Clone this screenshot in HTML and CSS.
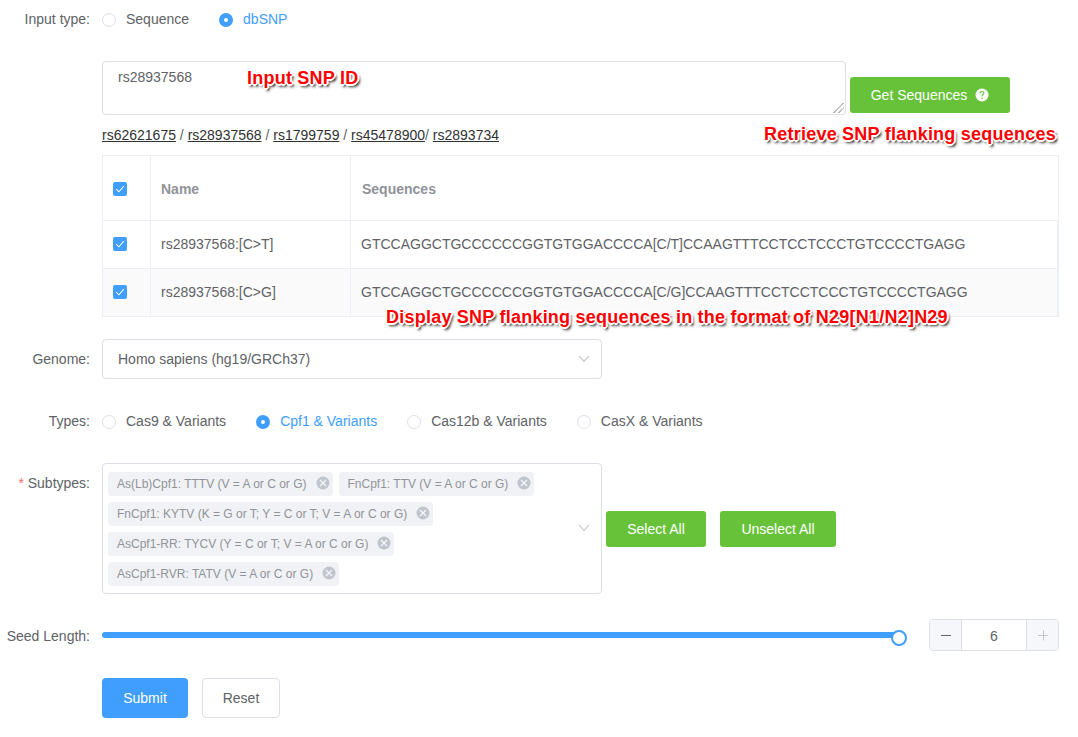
FILE: index.html
```html
<!DOCTYPE html>
<html lang="en">
<head>
<meta charset="utf-8">
<title>SNP design form</title>
<link rel="stylesheet" href="styles.css">
</head>
<body>
<svg class="defs" width="0" height="0">
  <symbol id="check" viewBox="0 0 14 14"><path d="M3.2 7.200 5.900 9.800 10.900 4" fill="none" stroke="#fff" stroke-width="1.1"/></symbol>
  <symbol id="down" viewBox="0 0 12 8"><path d="M1 1 6 6.4 11 1" fill="none" stroke="#c0c4cc" stroke-width="1.1"/></symbol>
  <symbol id="close" viewBox="0 0 14 14"><circle cx="7" cy="7" r="6.5" fill="#c0c4cc"/><path d="M4 4 10 10M10 4 4 10" stroke="#f4f5f8" stroke-width="1.4"/></symbol>
</svg>
<form class="form">
  <div class="item">
    <div class="label">Input type:</div>
    <div class="content radios">
      <label class="radio"><i class="dot"></i>Sequence</label>
      <label class="radio on"><i class="dot"></i>dbSNP</label>
    </div>
  </div>
  <div class="item">
    <div class="label"></div>
    <div class="content">
      <div class="query">
        <div class="textarea">rs28937568
          <svg class="grip" width="12" height="12"><path d="M.5 11 10.500 1M5.500 11 10.500 6" stroke="#555" stroke-width="1" stroke-dasharray="1.2 .4"/></svg>
          <span class="note note-input">Input SNP ID</span>
        </div>
        <div class="btn green fetch">Get Sequences
          <svg width="14" height="14" viewBox="0 0 14 14"><circle cx="7" cy="7" r="6.5" fill="#fff"/><path d="M5 5.6C5 4.2 5.8 3.5 7 3.5s2 .8 2 1.8C9 6.600 7 6.500 7 8.300" fill="none" stroke="#67c23a" stroke-width="1.1"/><circle cx="7" cy="10.200" r=".75" fill="#67c23a"/></svg>
        </div>
      </div>
      <div class="links"><a>rs62621675</a> / <a>rs28937568</a> / <a>rs1799759</a> / <a>rs45478900</a>/ <a>rs2893734</a><span class="note note-get">Retrieve SNP flanking sequences</span></div>
      <div class="table">
        <div class="tr head"><div class="td"><svg class="box"><use href="#check"/></svg></div><div class="td">Name</div><div class="td">Sequences</div></div>
        <div class="tr"><div class="td"><svg class="box"><use href="#check"/></svg></div><div class="td">rs28937568:[C&gt;T]</div><div class="td">GTCCAGGCTGCCCCCCGGTGTGGACCCCA[C/T]CCAAGTTTCCTCCTCCCTGTCCCCTGAGG</div></div>
        <div class="tr striped"><div class="td"><svg class="box"><use href="#check"/></svg></div><div class="td">rs28937568:[C&gt;G]</div><div class="td">GTCCAGGCTGCCCCCCGGTGTGGACCCCA[C/G]CCAAGTTTCCTCCTCCCTGTCCCCTGAGG</div></div>
        <span class="note note-format">Display SNP flanking sequences in the format of N29[N1/N2]N29</span>
      </div>
    </div>
  </div>
  <div class="item">
    <div class="label">Genome:</div>
    <div class="content"><div class="select">Homo sapiens (hg19/GRCh37)<svg class="arrow" width="12" height="8"><use href="#down"/></svg></div></div>
  </div>
  <div class="item">
    <div class="label">Types:</div>
    <div class="content radios">
      <label class="radio"><i class="dot"></i>Cas9 &amp; Variants</label>
      <label class="radio on"><i class="dot"></i>Cpf1 &amp; Variants</label>
      <label class="radio"><i class="dot"></i>Cas12b &amp; Variants</label>
      <label class="radio"><i class="dot"></i>CasX &amp; Variants</label>
    </div>
  </div>
  <div class="item">
    <div class="label"><span class="star">*</span> Subtypes:</div>
    <div class="content subtypes">
      <div class="multi">
        <div class="tags">
          <span class="tag">As(Lb)Cpf1: TTTV (V = A or C or G)<svg><use href="#close"/></svg></span>
          <span class="tag">FnCpf1: TTV (V = A or C or G)<svg><use href="#close"/></svg></span>
          <span class="tag">FnCpf1: KYTV (K = G or T; Y = C or T; V = A or C or G)<svg><use href="#close"/></svg></span>
          <span class="tag">AsCpf1-RR: TYCV (Y = C or T; V = A or C or G)<svg><use href="#close"/></svg></span>
          <span class="tag">AsCpf1-RVR: TATV (V = A or C or G)<svg><use href="#close"/></svg></span>
        </div>
        <svg class="arrow" width="12" height="8"><use href="#down"/></svg>
      </div>
      <div class="btn green all">Select All</div>
      <div class="btn green none">Unselect All</div>
    </div>
  </div>
  <div class="item">
    <div class="label">Seed Length:</div>
    <div class="content seed">
      <div class="track"><i class="knob"></i></div>
      <div class="stepper">
        <div class="step"><svg width="12" height="12"><path d="M1 5.500H11" stroke="#606266"/></svg></div>
        <div class="value">6</div>
        <div class="step"><svg width="12" height="12"><path d="M1 5.500H11M6.500 0.500V10.500" stroke="#c0c4cc"/></svg></div>
      </div>
    </div>
  </div>
  <div class="item">
    <div class="label"></div>
    <div class="content actions">
      <div class="btn blue">Submit</div>
      <div class="btn plain">Reset</div>
    </div>
  </div>
</form>
</body>
</html>
```
FILE: styles.css
```css
* { box-sizing: border-box; }
body {
  margin: 0;
  height: 737px;
  overflow: hidden;
  background: #fff;
  color: #606266;
  font: 14px/40px "Liberation Sans", Arial, sans-serif;
}
.defs { position: absolute; }
.form {
  display: flex;
  flex-direction: column;
  gap: 22px;
  width: 1059px;
  margin-top: -1px;
}
.item { display: flex; }
.label {
  width: 102px;
  flex: none;
  padding-right: 12px;
  text-align: right;
  white-space: nowrap;
}
.star { color: #f56c6c; }
.content { flex: 1; min-width: 0; }
.radios { display: flex; gap: 30px; height: 40px; }
.radio { display: flex; align-items: center; }
.dot {
  width: 14px;
  height: 14px;
  margin: 2px 10px 0 0;
  border: 1px solid #dcdfe6;
  border-radius: 50%;
}
.on { color: #409eff; }
.on .dot { border: 5px solid #409eff; }

.query { display: flex; align-items: flex-end; gap: 4px; height: 54px; }
.textarea {
  position: relative;
  width: 744px;
  height: 54px;
  padding: 5px 15px;
  border: 1px solid #dcdfe6;
  border-radius: 4px;
  line-height: 21px;
}
.grip { position: absolute; right: 0; bottom: 0; }
.btn {
  display: flex;
  align-items: center;
  justify-content: center;
  height: 36px;
  border-radius: 3px;
  line-height: 36px;
  white-space: nowrap;
}
.green { background: #67c23a; color: #fff; }
.fetch { width: 160px; gap: 8px; margin-bottom: 2px; }
.links { position: relative; height: 40px; white-space: pre; }
.links a { color: #303133; text-decoration: underline; }

.note {
  position: absolute;
  z-index: 1;
  color: #f00;
  font-size: 18px;
  font-weight: bold;
  letter-spacing: 0.23px;
  line-height: 20px;
  white-space: nowrap;
  text-shadow: 1px 0 #fff, -1px 0 #fff, 0 1px #fff, 0 -1px #fff,
    1px 1px #fff, -1px 1px #fff, 1px -1px #fff, -1px -1px #fff,
    2px 0 #fff, -2px 0 #fff, 0 2px #fff, 0 -2px #fff,
    2px 3px 3px rgba(0, 0, 0, 0.75), 2px 2px 2px rgba(0, 0, 0, 0.55);
}
.note-input { left: 144px; top: 6px; }
.note-get { left: 662px; top: 9px; }
.note-format { left: 283px; top: 151px; }

.table {
  position: relative;
  height: 162px;
  border: 1px solid #ebeef5;
  border-bottom: 0;
  line-height: 23px;
}
.tr {
  display: grid;
  grid-template-columns: 48px 200px 1fr;
  height: 48px;
  border-bottom: 1px solid #ebeef5;
}
.tr:not(.head) { border-right: 1px solid #ebeef5; }
.head { height: 65px; color: #909399; font-weight: bold; }
.striped { background: #fafafa; }
.td {
  display: flex;
  align-items: center;
  padding-left: 10px;
  border-right: 1px solid #ebeef5;
  white-space: nowrap;
}
.td:last-child { border-right: 0; }
.head .td { padding-top: 2px; }
.head .td:last-child { padding-left: 11px; }
.box { width: 14px; height: 14px; border-radius: 2px; background: #409eff; }
.tr:not(.head) .box { margin-top: -1px; }

.select, .multi {
  display: flex;
  align-items: center;
  justify-content: space-between;
  width: 500px;
  border: 1px solid #dcdfe6;
  border-radius: 4px;
}
.select { height: 40px; padding: 0 11px 0 15px; }
.subtypes { display: flex; align-items: center; }
.multi { height: 131px; padding: 0 11px 0 5px; }
.multi .arrow { margin-top: -2px; }
.tags { display: flex; flex-wrap: wrap; gap: 6px; width: 450px; }
.tag {
  display: flex;
  align-items: center;
  gap: 9px;
  height: 24px;
  padding: 0 3px 0 9px;
  border-radius: 4px;
  background: #f0f2f5;
  color: #909399;
  font-size: 12px;
  line-height: 24px;
  white-space: nowrap;
}
.tag svg { width: 14px; height: 14px; margin-top: -2px; }
.all { width: 100px; margin-left: 4px; }
.none { width: 116px; margin-left: 14px; }

.seed { display: flex; justify-content: space-between; align-items: center; height: 40px; }
.track {
  position: relative;
  width: 797px;
  height: 6px;
  margin-bottom: 2px;
  border-radius: 3px;
  background: #409eff;
}
.knob {
  position: absolute;
  right: -8px;
  top: -2px;
  width: 16px;
  height: 16px;
  border: 2px solid #409eff;
  border-radius: 50%;
  background: #fff;
}
.stepper {
  display: grid;
  grid-template-columns: 31px 1fr 31px;
  width: 130px;
  height: 32px;
  margin-top: -2px;
  border: 1px solid #dcdfe6;
  border-radius: 4px;
  overflow: hidden;
  line-height: 32px;
}
.step { display: grid; place-items: center; background: #f5f7fa; }
.value { border: solid #dcdfe6; border-width: 0 1px; text-align: center; }
.actions { display: flex; gap: 14px; }
.actions .btn { height: 40px; border-radius: 4px; }
.blue { width: 86px; background: #409eff; color: #fff; }
.plain { width: 78px; border: 1px solid #dcdfe6; }
```
